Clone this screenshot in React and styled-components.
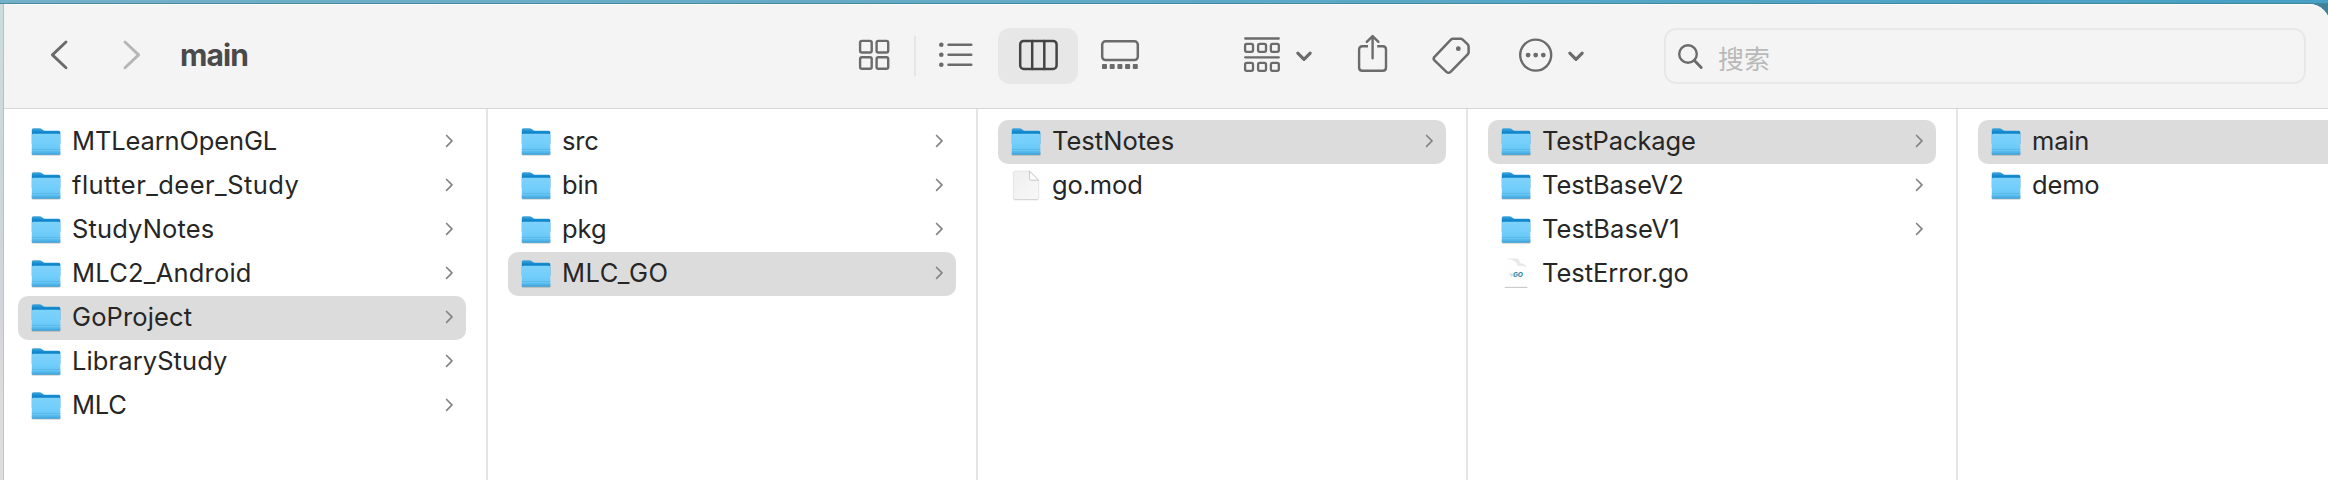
import React from "react";
import styled, { createGlobalStyle } from "styled-components";

const GlobalStyle = createGlobalStyle`
  *, *::before, *::after { box-sizing: border-box; }
  html, body { margin: 0; padding: 0; overflow: hidden; }
  body {
    font-family: Inter, "Liberation Sans", "Noto Sans CJK SC", sans-serif;
    -webkit-font-smoothing: antialiased;
  }
  svg { display: block; flex: none; }
`;

const Desktop = styled.div`
  width: 2328px;
  height: 480px;
  padding: 4px 0 0 4px;
  overflow: hidden;
  background:
    linear-gradient(90deg, #74b0c8 0%, #5fa9c6 50%, #46a0c4 100%) 0 0 / 100% 3px no-repeat,
    linear-gradient(90deg, #4d8ba3 0%, #3f86a0 100%) 0 3px / 100% 1px no-repeat,
    linear-gradient(#cddcdd 0%, #cbd8d9 35%, #d2d4dc 62%, #dcdcdc 80%, #dedede 100%) 0 4px / 3px 100% no-repeat,
    linear-gradient(#b4c0c1, #c4c4c4) 3px 4px / 1px 100% no-repeat,
    #3f819b;
`;

const Window = styled.main`
  width: 2326px;
  height: 476px;
  display: flex;
  flex-direction: column;
  background: #fff;
  border-top-right-radius: 21px;
  overflow: hidden;
`;

const Toolbar = styled.header`
  flex: none;
  height: 105px;
  padding-left: 36px;
  display: flex;
  align-items: center;
  background: #f4f4f4;
  border-bottom: 1px solid #d7d7d7;
  box-shadow: inset 0 1px 0 #fdfdfd;
`;

const ToolButton = styled.button`
  flex: none;
  width: ${(p) => p.$width}px;
  height: 56px;
  margin: 0 0 0 ${(p) => p.$gap || 0}px;
  padding: 0;
  border: 0;
  border-radius: 12px;
  background: ${(p) => (p.$active ? "#e7e7e7" : "transparent")};
  color: ${(p) => (p.$active ? "#444" : p.$disabled ? "#b6b6b6" : "#6b6b6b")};
`;

const Title = styled.h1`
  flex: none;
  width: 654px;
  margin: 0 0 0 28px;
  padding-bottom: 2px;
  font-size: 30px;
  line-height: 40px;
  font-weight: 700;
  letter-spacing: -0.9px;
  color: #4a4a4a;
`;

const ViewSwitch = styled.div`
  display: flex;
  align-items: center;
`;

const Separator = styled.span`
  width: 2px;
  height: 40px;
  background: #e6e6e6;
`;

const SearchField = styled.label`
  flex: none;
  width: 642px;
  height: 56px;
  margin-left: 72px;
  padding-left: 11px;
  display: flex;
  align-items: center;
  gap: 13px;
  border: 2px solid #e8e8e8;
  border-radius: 12px;
  color: #6b6b6b;
`;

const Placeholder = styled.span`
  padding-top: 4px;
  font-family: "Noto Sans CJK SC", sans-serif;
  font-size: 26px;
  line-height: 40px;
  color: #b9b9b9;
`;

const Browser = styled.div`
  flex: 1;
  display: flex;
`;

const Column = styled.ul`
  flex: none;
  width: ${(p) => (p.$first ? 484 : 490)}px;
  margin: 0;
  padding: 11px 20px 0 ${(p) => (p.$first ? 14 : 20)}px;
  list-style: none;
  border-right: 2px solid #e5e5e5;
`;

const Row = styled.li`
  height: 44px;
  padding: 0 12px 0 12px;
  display: flex;
  align-items: center;
  border-radius: 10px;
  background: ${(p) => (p.$selected ? "#dcdcdc" : "transparent")};
`;

const Name = styled.span`
  flex: 1;
  margin-left: 8px;
  padding-bottom: 3px;
  font-size: 25.5px;
  line-height: 36px;
  letter-spacing: ${(p) => p.$tracking}px;
  white-space: nowrap;
  color: #262626;
`;

function Glyph({ width, children, stroke = 2.4 }) {
  return (
    <svg
      width={width}
      height="56"
      viewBox={`0 0 ${width} 56`}
      fill="none"
      stroke="currentColor"
      strokeWidth={stroke}
      strokeLinecap="round"
      strokeLinejoin="round"
    >
      {children}
    </svg>
  );
}

const BackIcon = () => (
  <Glyph width={40} stroke={2.9}>
    <path d="M26 14 12.4 26.9 26 39.8" />
  </Glyph>
);

const ForwardIcon = () => (
  <Glyph width={40} stroke={2.9}>
    <path d="M13 14 26.6 26.9 13 39.8" />
  </Glyph>
);

const GridIcon = () => (
  <Glyph width={80}>
    {[12.9, 29.2].map((y) =>
      [26.1, 42.6].map((x) => <rect key={`${x}-${y}`} x={x} y={y} width="11.6" height="11.6" rx="1.8" />)
    )}
  </Glyph>
);

const ListIcon = () => (
  <Glyph width={82}>
    {[16.7, 26.7, 36.7].map((y) => (
      <g key={y}>
        <circle cx="25.3" cy={y} r="2.3" fill="currentColor" stroke="none" />
        <path d={`M32.5 ${y}H55.3`} />
      </g>
    ))}
  </Glyph>
);

const ColumnsIcon = () => (
  <Glyph width={80} stroke={2.5}>
    <rect x="22.2" y="12.9" width="36.4" height="28" rx="3.5" />
    <path d="M34.2 13V41M46.3 13V41" />
  </Glyph>
);

const GalleryIcon = () => (
  <Glyph width={82} stroke={2.5}>
    <rect x="24.2" y="13.3" width="35.6" height="18.8" rx="3.3" />
    {[24, 31.7, 39.4, 47.1, 54.8].map((x) => (
      <rect key={x} x={x} y="36" width="5" height="5" rx="0.9" fill="currentColor" stroke="none" />
    ))}
  </Glyph>
);

const GroupIcon = () => (
  <Glyph width={82} stroke={2.3}>
    <path d="M9.2 10.5H42.8M9.2 29.3H42.8" />
    {[15.9, 34.9].map((y) =>
      [9.1, 22.1, 34.9].map((x) => <rect key={`${x}-${y}`} x={x} y={y} width="7.9" height="8" rx="1.6" />)
    )}
    <path strokeWidth="3.1" d="M61.8 25.2 68 31.4 74.2 25.2" />
  </Glyph>
);

const ShareIcon = () => (
  <Glyph width={46} stroke={2.4}>
    <path d="M18 18.2H12.4Q9.1 18.2 9.1 21.5V39.4Q9.1 42.7 12.4 42.7H32.7Q36 42.7 36 39.4V21.5Q36 18.2 32.7 18.2H27.2" strokeLinecap="butt" />
    <path d="M22.6 30.2V8.4M16.8 13.9 22.6 8.1 28.4 13.9" />
  </Glyph>
);

const TagIcon = () => (
  <Glyph width={46} stroke={2.5}>
    <path d="M24.9 10.8H32.6Q33.9 10.8 34.7 11.6L39.5 16.1Q40.6 17.2 40.6 18.5V24.4Q40.6 25.5 39.7 26.4L22.6 43.8Q20.5 45.8 18.4 43.8L6.5 32.3Q4.8 30.6 6.5 28.8L22.9 11.7Q23.8 10.8 24.9 10.8Z" />
    <circle cx="30.3" cy="20.7" r="2.4" fill="currentColor" stroke="none" />
  </Glyph>
);

const MoreIcon = () => (
  <Glyph width={82} stroke={2.4}>
    <circle cx="25.7" cy="27.1" r="15.5" />
    <g fill="currentColor" stroke="none">
      <circle cx="18.1" cy="27.1" r="2.4" />
      <circle cx="25.7" cy="27.1" r="2.4" />
      <circle cx="33.3" cy="27.1" r="2.4" />
    </g>
    <path strokeWidth="3.1" d="M59.8 25.2 66 31.4 72.2 25.2" />
  </Glyph>
);

const SearchIcon = () => (
  <Glyph width={28} stroke={2.4}>
    <circle cx="11" cy="26" r="8.8" />
    <path strokeWidth="2.9" d="M17.4 32.5 24.2 39.4" />
  </Glyph>
);

const DisclosureIcon = () => (
  <svg width="10" height="16" viewBox="0 0 10 16" fill="none" stroke="#858585" strokeWidth="1.7" strokeLinecap="round" strokeLinejoin="round">
    <path d="M2.6 1.5 8 6.9 2.6 12.3" />
  </svg>
);

const IconDefs = () => (
  <svg width="0" height="0" aria-hidden="true">
    <defs>
      <linearGradient id="folderBack" x1="0" y1="0" x2="0" y2="1">
        <stop offset="0" stopColor="#43a8dc" />
        <stop offset="0.25" stopColor="#0f86cb" />
        <stop offset="1" stopColor="#1688c8" />
      </linearGradient>
      <linearGradient id="folderFront" x1="0" y1="0" x2="0" y2="1">
        <stop offset="0" stopColor="#7fd2fb" />
        <stop offset="0.5" stopColor="#72cefb" />
        <stop offset="1" stopColor="#62c3f3" />
      </linearGradient>
      <linearGradient id="paper" x1="0" y1="0" x2="1" y2="1">
        <stop offset="0" stopColor="#efefef" />
        <stop offset="1" stopColor="#f8f8f8" />
      </linearGradient>
    </defs>
  </svg>
);

const FolderIcon = () => (
  <svg width="34" height="36" viewBox="0 0 34 36">
    <rect x="1.6" y="28" width="29" height="3.6" rx="1.4" fill="#000" opacity="0.26" />
    <path d="M1.8 5.8Q1.8 4.2 3.4 4.2H9.5Q10.7 4.2 11.7 5L12.9 6Q13.7 6.7 14.9 6.7H28.8Q30.3 6.7 30.3 8.2V20H1.8Z" fill="url(#folderBack)" />
    <path d="M1.8 11.3Q1.8 9.8 3.3 9.8H28.8Q30.3 9.8 30.3 11.3V29Q30.3 30.5 28.8 30.5H3.3Q1.8 30.5 1.8 29Z" fill="url(#folderFront)" />
    <path d="M1.8 27.2H30.3V29Q30.3 30.5 28.8 30.5H3.3Q1.8 30.5 1.8 29Z" fill="#52b6ea" />
    <path d="M1.8 25.5H30.3" stroke="#55b5e5" strokeWidth="0.8" />
    <path d="M2.2 30H29.9" stroke="#3b9bcd" strokeWidth="0.9" />
  </svg>
);

const DocumentIcon = () => (
  <svg width="34" height="36" viewBox="0 0 34 36">
    <path d="M3.4 5Q3.4 3.2 5.2 3.2H19.5L28.7 12.3V29.8Q28.7 31.6 26.9 31.6H5.2Q3.4 31.6 3.4 29.8Z" fill="url(#paper)" stroke="#dedede" strokeWidth="0.8" />
    <path d="M4.2 31.7H28" stroke="#cfcfcf" strokeWidth="0.9" />
    <path d="M19.5 3.2V10.5Q19.5 12.2 21.2 12.2H28.7Z" fill="#fdfdfd" stroke="#bdbdbd" strokeWidth="0.8" />
  </svg>
);

const GoFileIcon = () => (
  <svg width="34" height="36" viewBox="0 0 34 36">
    <path d="M4.8 2.2H18.5Q21 3 21.4 6.8Q26 7.6 27.2 10.8V31H4.8Z" fill="#fefefe" />
    <path d="M5 2.4H16.5Q19.4 2.6 20 7.1Q25.6 7.6 26.9 12Q24.8 9.2 17.5 9.8Q17.6 4 5 2.4Z" fill="#e9e9e9" />
    <path d="M4.8 31.4H27.4" stroke="#bdbdbd" strokeWidth="0.9" />
    <path d="M9.6 18.2H12.6M11 19.8H12.6" stroke="#7fb9cb" strokeWidth="0.7" />
    <text x="12.9" y="21.4" fontFamily="Inter, sans-serif" fontSize="6.6" fontWeight="800" fontStyle="italic" fill="#3d8fa8">GO</text>
  </svg>
);

const icons = { folder: FolderIcon, document: DocumentIcon, go: GoFileIcon };

const columns = [
  {
    selected: "GoProject",
    items: [
      { name: "MTLearnOpenGL", tracking: -0.14 },
      { name: "flutter_deer_Study", tracking: 0.46 },
      { name: "StudyNotes", tracking: 0.15 },
      { name: "MLC2_Android", tracking: 0.22 },
      { name: "GoProject", tracking: 0.12 },
      { name: "LibraryStudy", tracking: 0.1 },
      { name: "MLC", tracking: -0.3 },
    ],
  },
  {
    selected: "MLC_GO",
    items: [{ name: "src" }, { name: "bin" }, { name: "pkg", tracking: 0 }, { name: "MLC_GO", tracking: 0.5 }],
  },
  { selected: "TestNotes", items: [{ name: "TestNotes", tracking: 0.02 }, { name: "go.mod", tracking: -0.15 }] },
  {
    selected: "TestPackage",
    items: [
      { name: "TestPackage", tracking: -0.13 },
      { name: "TestBaseV2", tracking: -0.05 },
      { name: "TestBaseV1", tracking: 0.05 },
      { name: "TestError.go", tracking: -0.03 },
    ],
  },
  { selected: "main", items: [{ name: "main" }, { name: "demo", tracking: -0.15 }] },
];

const kindOf = (name) => (name.endsWith(".mod") ? "document" : name.endsWith(".go") ? "go" : "folder");

function Entry({ name, tracking = -0.2, selected }) {
  const kind = kindOf(name);
  const Icon = icons[kind];
  return (
    <Row $selected={selected}>
      <Icon />
      <Name $tracking={tracking}>{name}</Name>
      {kind === "folder" && <DisclosureIcon />}
    </Row>
  );
}

export default function App() {
  return (
    <>
      <GlobalStyle />
      <Desktop>
        <IconDefs />
        <Window>
          <Toolbar>
            <ToolButton $width={40} aria-label="Back"><BackIcon /></ToolButton>
            <ToolButton $width={40} $gap={32} $disabled aria-label="Forward"><ForwardIcon /></ToolButton>
            <Title>main</Title>
            <ViewSwitch>
              <ToolButton $width={80} aria-label="Icons"><GridIcon /></ToolButton>
              <Separator />
              <ToolButton $width={82} aria-label="List"><ListIcon /></ToolButton>
              <ToolButton $width={80} $active aria-label="Columns"><ColumnsIcon /></ToolButton>
              <ToolButton $width={82} aria-label="Gallery"><GalleryIcon /></ToolButton>
            </ViewSwitch>
            <ToolButton $width={82} $gap={76} aria-label="Group"><GroupIcon /></ToolButton>
            <ToolButton $width={46} $gap={32} aria-label="Share"><ShareIcon /></ToolButton>
            <ToolButton $width={46} $gap={32} aria-label="Tags"><TagIcon /></ToolButton>
            <ToolButton $width={82} $gap={36} aria-label="More"><MoreIcon /></ToolButton>
            <SearchField>
              <SearchIcon />
              <Placeholder>搜索</Placeholder>
            </SearchField>
          </Toolbar>
          <Browser>
            {columns.map((column, i) => (
              <Column key={column.selected} $first={i === 0}>
                {column.items.map((item) => (
                  <Entry key={item.name} {...item} selected={item.name === column.selected} />
                ))}
              </Column>
            ))}
          </Browser>
        </Window>
      </Desktop>
    </>
  );
}
